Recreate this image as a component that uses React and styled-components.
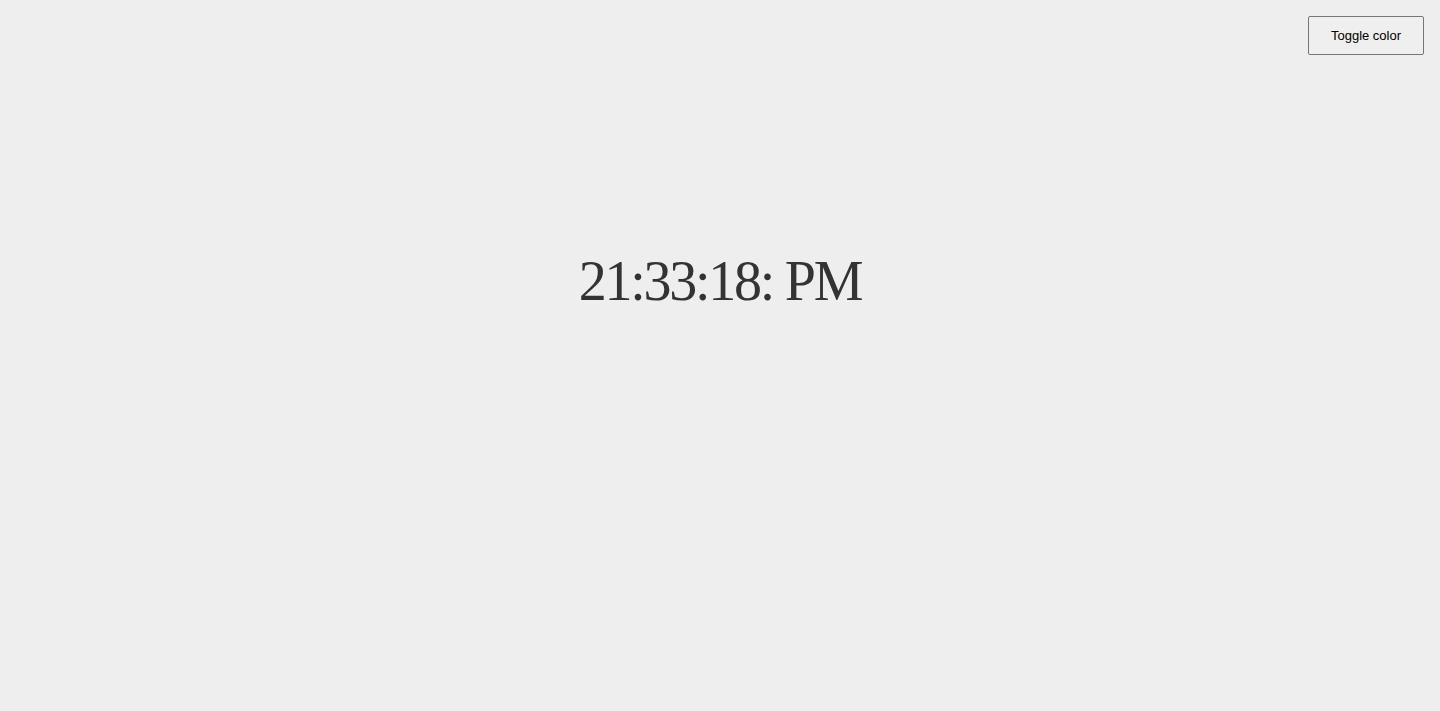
import React from 'react'
import styled, { createGlobalStyle } from 'styled-components'

const GlobalStyle = createGlobalStyle`
  html, body {
    margin: 0;
    padding: 0;
    background: #eeeeee;
  }
`

const Page = styled.div`
  display: flex;
  flex-direction: column;
  min-height: 100vh;
  background: #eeeeee;
`

const TopBar = styled.div`
  display: flex;
  justify-content: flex-end;
  padding: 16px 16px 0;
`

const ToggleButton = styled.button`
  width: 116px;
  height: 39px;
  padding: 0;
  font-family: 'Liberation Sans', Arial, sans-serif;
  font-size: 13px;
  color: #000;
  background: #efefef;
  border: 1px solid #767676;
  border-radius: 2px;
  cursor: pointer;
`

const Clock = styled.div`
  margin-top: 194px;
  text-align: center;
  font-family: 'Liberation Serif', 'Times New Roman', serif;
  font-size: 56px;
  letter-spacing: -2.25px;
  color: ${p => (p.$dark ? '#333333' : '#c0392b')};
`

const App = () => {
  const [dark, setDark] = React.useState(true)
  return (
    <Page>
      <GlobalStyle />
      <TopBar>
        <ToggleButton onClick={() => setDark(d => !d)}>Toggle color</ToggleButton>
      </TopBar>
      <Clock $dark={dark}>21:33:18: PM</Clock>
    </Page>
  )
}

export default App
